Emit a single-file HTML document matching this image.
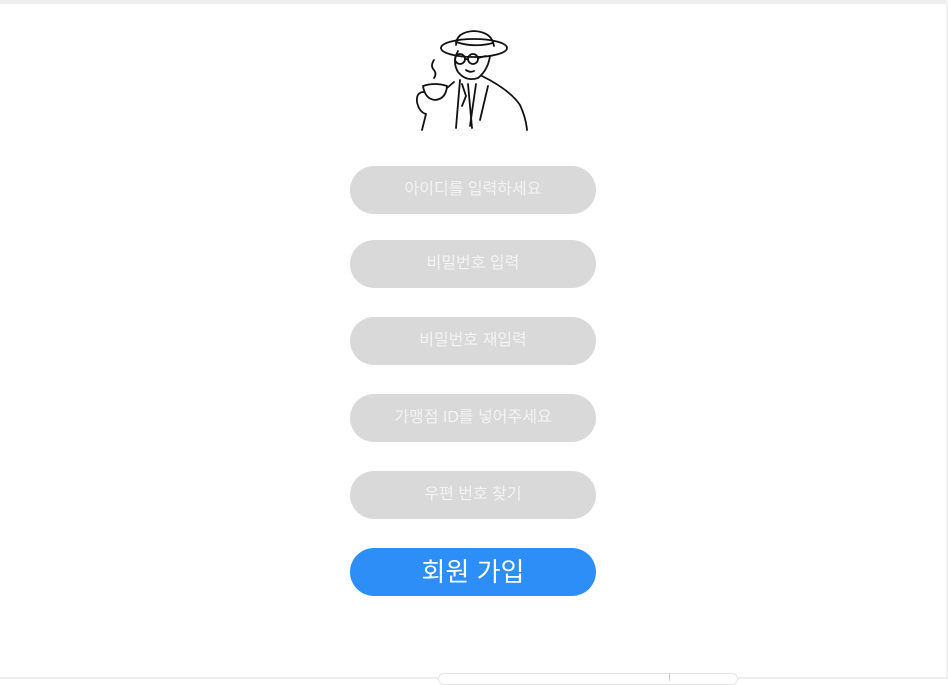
<!DOCTYPE html>
<html><head><meta charset="utf-8"><style>
html,body{margin:0;padding:0;background:#fff;}
body{width:948px;height:679px;position:relative;overflow:hidden;font-family:"Liberation Sans","Noto Sans CJK KR",sans-serif;}
.top{position:absolute;left:0;top:0;width:948px;height:4px;background:#eeeeee;}
.right{position:absolute;right:0;top:0;width:2px;height:679px;background:#f2f2f2;}
.f{position:absolute;left:350px;width:246px;height:48px;border-radius:24px;background:#d9d9d9;color:#f3f3f3;font-size:16px;line-height:48px;text-align:center;}
.btn{background:#2d8ef8;color:#fff;font-size:26px;}
.bot{position:absolute;left:0;top:677px;width:948px;height:2px;background:#efefef;}
.tab{position:absolute;left:438px;top:673px;width:298px;height:10px;border:1px solid #e6e6e6;border-radius:8px;background:#fff;}
.sep{position:absolute;left:669px;top:673px;width:1px;height:8px;background:#ccc;}
</style></head><body>
<div class="top"></div><div class="right"></div>
<svg style="position:absolute;left:410px;top:26px" width="125" height="110" viewBox="410 26 125 110" fill="none" stroke="#111" stroke-width="1.8" stroke-linecap="round" stroke-linejoin="round">
<ellipse cx="474" cy="48" rx="33" ry="9"/>
<path d="M456 45 Q456 32 474 31 Q492 32 494 46"/>
<path d="M456 42 Q474 48 493 43"/>
<path d="M458 51 Q452 62 458 72 Q466 82 478 78 Q488 70 490 56"/>
<circle cx="460" cy="59" r="5"/><circle cx="473" cy="59" r="5"/><path d="M465 59h3M478 58l8-2"/>
<path d="M466 70 Q470 73 474 71"/>
<path d="M434 60 Q430 66 434 70 Q437 74 434 78"/>
<path d="M423 86 Q435 82 447 86 Q446 99 435 100 Q425 99 423 86Z"/>
<path d="M424 92 Q416 92 417 102 Q419 112 426 114 L422 130"/>
<path d="M447 88 L454 82 M460 80 L456 128 M468 84 L472 128 M462 84 L466 96 L462 106"/>
<path d="M482 76 Q510 90 520 105 Q526 118 527 130"/>
<path d="M476 84 L470 126 M488 86 L480 120"/>
</svg>
<div class="f" style="top:166px">아이디를 입력하세요</div>
<div class="f" style="top:240px">비밀번호 입력</div>
<div class="f" style="top:317px">비밀번호 재입력</div>
<div class="f" style="top:394px">가맹점 ID를 넣어주세요</div>
<div class="f" style="top:471px">우편 번호 찾기</div>
<div class="f btn" style="top:548px">회원 가입</div>
<div class="bot"></div>
<div class="tab"></div><div class="sep"></div>
</body></html>
